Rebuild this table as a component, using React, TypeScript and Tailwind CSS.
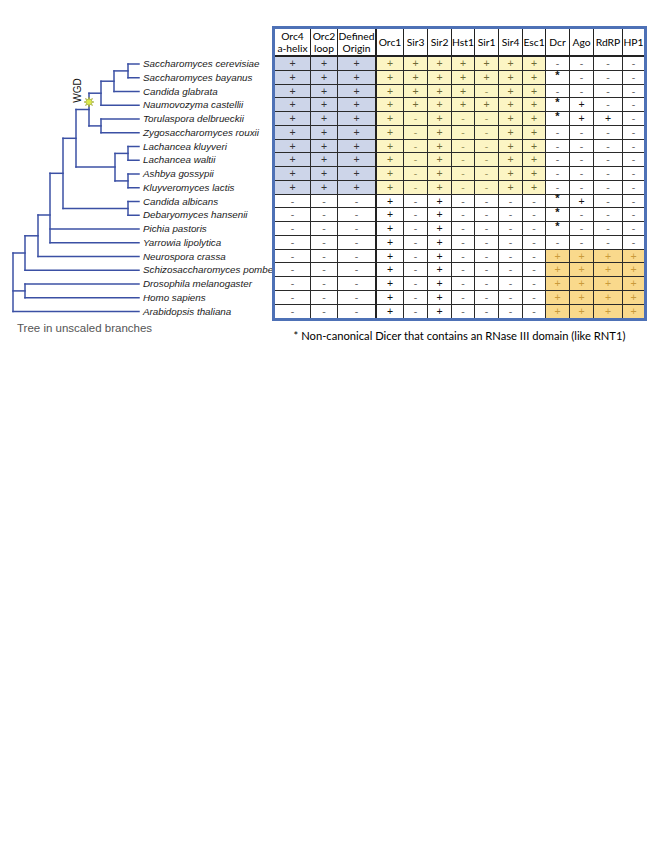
import { FC } from 'react'

const species = [
  'Saccharomyces cerevisiae',
  'Saccharomyces bayanus',
  'Candida glabrata',
  'Naumovozyma castellii',
  'Torulaspora delbrueckii',
  'Zygosaccharomyces rouxii',
  'Lachancea kluyveri',
  'Lachancea waltii',
  'Ashbya gossypii',
  'Kluyveromyces lactis',
  'Candida albicans',
  'Debaryomyces hansenii',
  'Pichia pastoris',
  'Yarrowia lipolytica',
  'Neurospora crassa',
  'Schizosaccharomyces pombe',
  'Drosophila melanogaster',
  'Homo sapiens',
  'Arabidopsis thaliana',
]

const headers = [
  'Orc4\na-helix',
  'Orc2\nloop',
  'Defined\nOrigin',
  'Orc1',
  'Sir3',
  'Sir2',
  'Hst1',
  'Sir1',
  'Sir4',
  'Esc1',
  'Dcr',
  'Ago',
  'RdRP',
  'HP1',
]

// one string per species, one char per column
const data = [
  '++++++++++----',
  '++++++++++*---',
  '+++++++-++----',
  '++++++++++*+--',
  '++++-+--++*++-',
  '++++-+--++----',
  '++++-+--++----',
  '++++-+--++----',
  '++++-+--++----',
  '++++-+--++----',
  '---+-+----*+--',
  '---+-+----*---',
  '---+-+----*---',
  '---+-+--------',
  '---+-+----++++',
  '---+-+----++++',
  '---+-+----++++',
  '---+-+----++++',
  '---+-+----++++',
]

const r = (i: number) => 64 + 13.75 * i

// [x1, y1, x2, y2]
const segs: number[][] = [
  // S. cer / S. bay
  [128, r(0), 128, r(1)],
  [128, r(0), 139, r(0)],
  [128, r(1), 139, r(1)],
  [114, 70.9, 114, r(2)],
  [114, 70.9, 128, 70.9],
  [114, r(2), 139, r(2)],
  [101, 81.2, 101, r(3)],
  [101, 81.2, 114, 81.2],
  [101, r(3), 139, r(3)],
  // Torulaspora / Zygo
  [101, r(4), 101, r(5)],
  [101, r(4), 139, r(4)],
  [101, r(5), 139, r(5)],
  // WGD node
  [89, 93.2, 89, 125.9],
  [89, 93.2, 101, 93.2],
  [89, 125.9, 101, 125.9],
  // Lachancea
  [128, r(6), 128, r(7)],
  [128, r(6), 139, r(6)],
  [128, r(7), 139, r(7)],
  // Ashbya / Kluyveromyces
  [128, r(8), 128, r(9)],
  [128, r(8), 139, r(8)],
  [128, r(9), 139, r(9)],
  [115, 153.4, 115, 180.9],
  [115, 153.4, 128, 153.4],
  [115, 180.9, 128, 180.9],
  [76, 109.5, 76, 167.1],
  [76, 109.5, 89, 109.5],
  [76, 167.1, 115, 167.1],
  // CTG
  [128, r(10), 128, r(11)],
  [128, r(10), 139, r(10)],
  [128, r(11), 139, r(11)],
  [63, 138.3, 63, 208.4],
  [63, 138.3, 76, 138.3],
  [63, 208.4, 128, 208.4],
  [50, 173.3, 50, r(13)],
  [50, 173.3, 63, 173.3],
  [50, r(12), 139, r(12)],
  [50, r(13), 139, r(13)],
  [38, 215, 38, r(14)],
  [38, 215, 50, 215],
  [38, r(14), 139, r(14)],
  [25, 235.8, 25, r(15)],
  [25, 235.8, 38, 235.8],
  [25, r(15), 139, r(15)],
  // Drosophila / Homo
  [25, r(16), 25, r(17)],
  [25, r(16), 139, r(16)],
  [25, r(17), 139, r(17)],
  // root
  [13, 253, 13, r(18)],
  [13, 253, 25, 253],
  [13, 290.9, 25, 290.9],
  [13, r(18), 139, r(18)],
]

const starPoints = (() => {
  const pts: string[] = []
  for (let k = 0; k < 16; k++) {
    const a = (Math.PI / 8) * k - Math.PI / 2
    const rad = k % 2 === 0 ? 5 : 2.4
    pts.push(`${(89 + rad * Math.cos(a)).toFixed(2)},${(102 + rad * Math.sin(a)).toFixed(2)}`)
  }
  return pts.join(' ')
})()

const Tree: FC = () => (
  <svg width={143} height={300} viewBox="0 26 143 300" className="shrink-0">
    {segs.map((s, i) => (
      <line
        key={i}
        x1={s[0]}
        y1={s[1]}
        x2={s[2]}
        y2={s[3]}
        stroke="#3b50a4"
        strokeWidth={1.5}
        strokeLinecap="square"
      />
    ))}
    <polygon points={starPoints} fill="#dcea4c" stroke="#9aa23a" strokeWidth={0.6} />
    <text
      transform="translate(80.5,90.5) rotate(-90)"
      textAnchor="middle"
      fontSize={10}
      fill="#111"
      fontFamily="'Liberation Sans', Arial, sans-serif"
    >
      WGD
    </text>
  </svg>
)

const cellBg = (row: number, col: number) => {
  if (row < 10 && col < 3) return 'bg-[#cdd5e9]'
  if (row < 10 && col < 10) return 'bg-[#fcf5c4]'
  if (row >= 14 && col >= 10) return 'bg-[#f9d98c]'
  return 'bg-white'
}

const textColor = (row: number, col: number, v: string) => {
  if (v === '*') return 'text-[#111]'
  if (row < 10 && col < 3) return 'text-[#333]'
  if (row < 10 && col < 10) return v === '+' ? 'text-[#6e6a34]' : 'text-[#9a9460]'
  if (row >= 14 && col >= 10) return 'text-[#c99a3a]'
  return v === '+' ? 'text-[#111]' : 'text-[#666]'
}

const Table: FC = () => (
  <div className="border-[3px] border-[#4e71b6] bg-white">
    <div className="grid grid-cols-[36px_27px_39px_27px_24px_24px_23px_24px_24px_23px_24px_24px_29px_21px] grid-rows-[28px_repeat(19,13.75px)] font-['Lato','Liberation_Sans',sans-serif]">
      {headers.map((h, c) => (
        <div
          key={h}
          className={`flex items-center justify-center whitespace-pre-line text-center text-[10.3px] leading-[12px] text-black border-b-2 border-b-[#222] ${
            c === 13 ? '' : c === 2 ? 'border-r-2 border-r-[#222]' : 'border-r border-r-[#222]'
          }`}
        >
          {h}
        </div>
      ))}
      {data.map((row, ri) =>
        row.split('').map((v, c) => (
          <div
            key={`${ri}-${c}`}
            className={`flex items-center justify-center text-[10.5px] leading-none font-['Liberation_Sans',sans-serif] ${cellBg(
              ri,
              c,
            )} ${textColor(ri, c, v)} ${ri === 18 ? '' : 'border-b border-b-[#2a2a2a]'} ${
              c === 13 ? '' : c === 2 ? 'border-r-2 border-r-[#222]' : 'border-r border-r-[#2a2a2a]'
            }`}
          >
            <span className={v === '*' ? '-translate-y-[2px] text-[11px] font-bold' : ''}>{v}</span>
          </div>
        )),
      )}
    </div>
  </div>
)

export default function App() {
  return (
    <div className="w-[657px] h-[850px] bg-white overflow-hidden">
      <div className="flex pt-[26px]">
        <div className="w-[272px] shrink-0">
          <div className="flex">
            <Tree />
            <ul className="pt-[31px] font-['Liberation_Sans',Arial,sans-serif] italic text-[9.8px] text-[#1a1a1a]">
              {species.map((s) => (
                <li key={s} className="h-[13.75px] leading-[13.75px] whitespace-nowrap">
                  {s}
                </li>
              ))}
            </ul>
          </div>
        </div>
        <div className="w-[375px] shrink-0">
          <Table />
          <p className="mt-[8px] text-center text-[11.2px] leading-[14px] text-black font-['Lato','Liberation_Sans',sans-serif]">
            * Non-canonical Dicer that contains an RNase III domain (like RNT1)
          </p>
        </div>
      </div>
      <p className="-mt-[22px] pl-[17px] text-[11.5px] leading-[14px] text-[#555] font-['Liberation_Sans',Arial,sans-serif]">
        Tree in unscaled branches
      </p>
    </div>
  )
}
